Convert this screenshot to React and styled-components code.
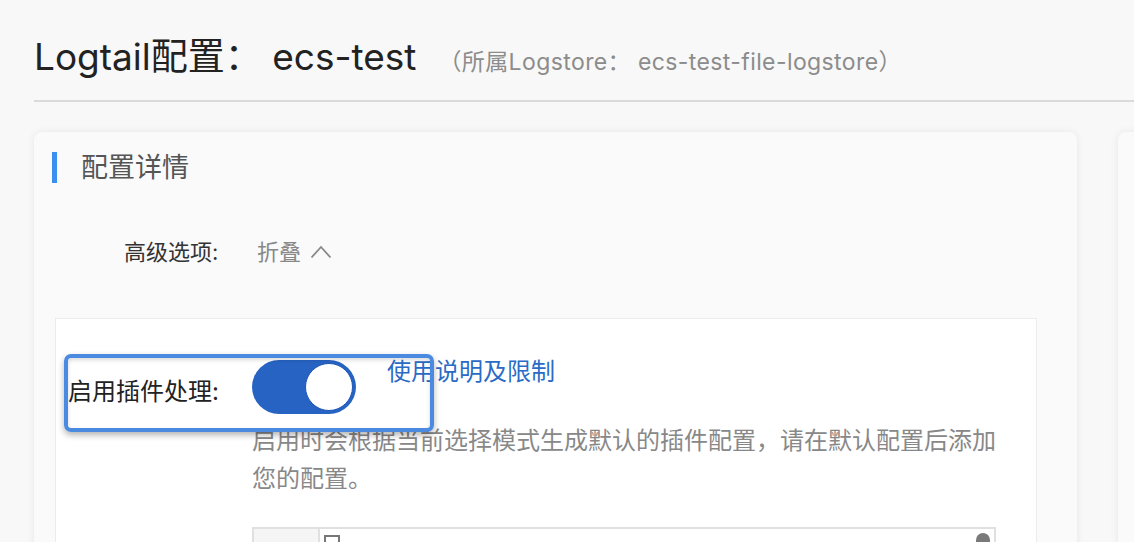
import React from "react";
import styled, { createGlobalStyle } from "styled-components";

const GlobalStyle = createGlobalStyle`
  html, body {
    margin: 0;
    background: #f8f8f8;
    font-family: Inter, "Noto Sans CJK SC", sans-serif;
  }
`;

const Page = styled.div`
  height: 542px;
  overflow: hidden;
  padding-left: 34px;
`;

const Header = styled.header`
  display: flex;
  align-items: baseline;
  height: 102px;
  box-sizing: border-box;
  padding-top: 31px;
  border-bottom: 2px solid #dadada;
`;

const Title = styled.h1`
  margin: 0;
  font-size: 37px;
  line-height: 52px;
  font-weight: 400;
  color: #222;
`;

const SubTitle = styled.span`
  margin-left: 22px;
  font-size: 23px;
  color: #8c8c8c;
  letter-spacing: 0.4px;
`;

const Columns = styled.div`
  display: flex;
  gap: 41px;
  margin-top: 30px;
`;

const Card = styled.section`
  flex: ${(p) => (p.$main ? "0 0 1043px" : "1")};
  height: 480px;
  box-sizing: border-box;
  background: #fafafa;
  border-radius: 8px 8px 0 0;
  box-shadow: 0 0 8px rgba(0, 0, 0, 0.07);
  padding: 20px 40px 0 21px;
`;

const SectionTitle = styled.h2`
  margin: 0 0 0 -3px;
  height: 31px;
  line-height: 31px;
  border-left: 5px solid #3b8ff1;
  padding-left: 24px;
  font-size: 27px;
  font-weight: 400;
  color: #555;
`;

const AdvRow = styled.div`
  display: flex;
  align-items: center;
  margin-top: 53px;
  padding-left: 69px;
  font-size: 22px;
  line-height: 32px;
`;

const AdvLabel = styled.span`
  color: #333;
  width: 133px;
`;

const Fold = styled.span`
  display: inline-flex;
  align-items: center;
  gap: 9px;
  color: #888;
`;

const InnerBox = styled.div`
  position: relative;
  margin-top: 50px;
  background: #fff;
  border: 1px solid #ececec;
  padding: 41px 0 0 12px;
  height: 400px;
`;

const FormRow = styled.div`
  display: grid;
  grid-template-columns: 184px auto auto 1fr;
  align-items: start;
`;

const Label = styled.label`
  align-self: center;
  font-size: 24px;
  line-height: 34px;
  color: #222;
  padding-top: 10px;
`;

const Switch = styled.div`
  width: 104px;
  height: 54px;
  box-sizing: border-box;
  border-radius: 27px;
  background: #2763c2;
  padding: 3px;
  display: flex;
  justify-content: flex-end;
`;

const Knob = styled.span`
  width: 48px;
  height: 48px;
  border-radius: 50%;
  background: #fff;
  box-sizing: border-box;
  border: 1px solid #1f58b8;
`;

const Link = styled.a`
  margin-left: 31px;
  margin-top: -3px;
  font-size: 24px;
  line-height: 30px;
  color: #2a6bc6;
  text-decoration: none;
`;

const Help = styled.p`
  margin: 8px 0 0 184px;
  width: 750px;
  font-size: 24px;
  line-height: 38px;
  color: #888;
`;

const Editor = styled.div`
  display: flex;
  margin: 29px 0 0 184px;
  width: 744px;
  height: 120px;
  border: 2px solid #e0e0e0;
  box-sizing: border-box;
`;

const Gutter = styled.div`
  width: 64px;
  background: #f5f5f5;
  border-right: 2px solid #e0e0e0;
`;

const Code = styled.div`
  position: relative;
  flex: 1;
  padding: 6px 0 0 4px;
`;

const FoldMark = styled.span`
  display: block;
  width: 16px;
  height: 16px;
  border: 2px solid #777;
  box-sizing: border-box;
`;

const ScrollThumb = styled.span`
  position: absolute;
  right: 4px;
  top: 4px;
  width: 14px;
  height: 40px;
  border-radius: 7px;
  background: #7a7a7a;
`;

const Highlight = styled.div`
  position: absolute;
  left: 8px;
  top: 35px;
  width: 370px;
  height: 78px;
  box-sizing: border-box;
  border: 4px solid #4a8ae0;
  border-radius: 7px;
  box-shadow: 0 3px 6px rgba(0, 0, 0, 0.3), inset 0 2px 4px rgba(0, 0, 0, 0.15);
  pointer-events: none;
`;

const Chevron = () => (
  <svg width="22" height="14" viewBox="0 0 22 14" fill="none">
    <path d="M1.5 12.5L11 2l9.5 10.5" stroke="#888" strokeWidth="1.8" />
  </svg>
);

export default function App() {
  return (
    <Page>
      <GlobalStyle />
      <Header>
        <Title>Logtail配置： ecs-test</Title>
        <SubTitle>（所属Logstore： ecs-test-file-logstore）</SubTitle>
      </Header>
      <Columns>
        <Card $main>
          <SectionTitle>配置详情</SectionTitle>
          <AdvRow>
            <AdvLabel>高级选项:</AdvLabel>
            <Fold>
              折叠 <Chevron />
            </Fold>
          </AdvRow>
          <InnerBox>
            <FormRow>
              <Label>启用插件处理:</Label>
              <Switch>
                <Knob />
              </Switch>
              <Link href="#">使用说明及限制</Link>
            </FormRow>
            <Help>
              启用时会根据当前选择模式生成默认的插件配置，请在默认配置后添加您的配置。
            </Help>
            <Editor>
              <Gutter />
              <Code>
                <FoldMark />
                <ScrollThumb />
              </Code>
            </Editor>
            <Highlight />
          </InnerBox>
        </Card>
        <Card />
      </Columns>
    </Page>
  );
}
